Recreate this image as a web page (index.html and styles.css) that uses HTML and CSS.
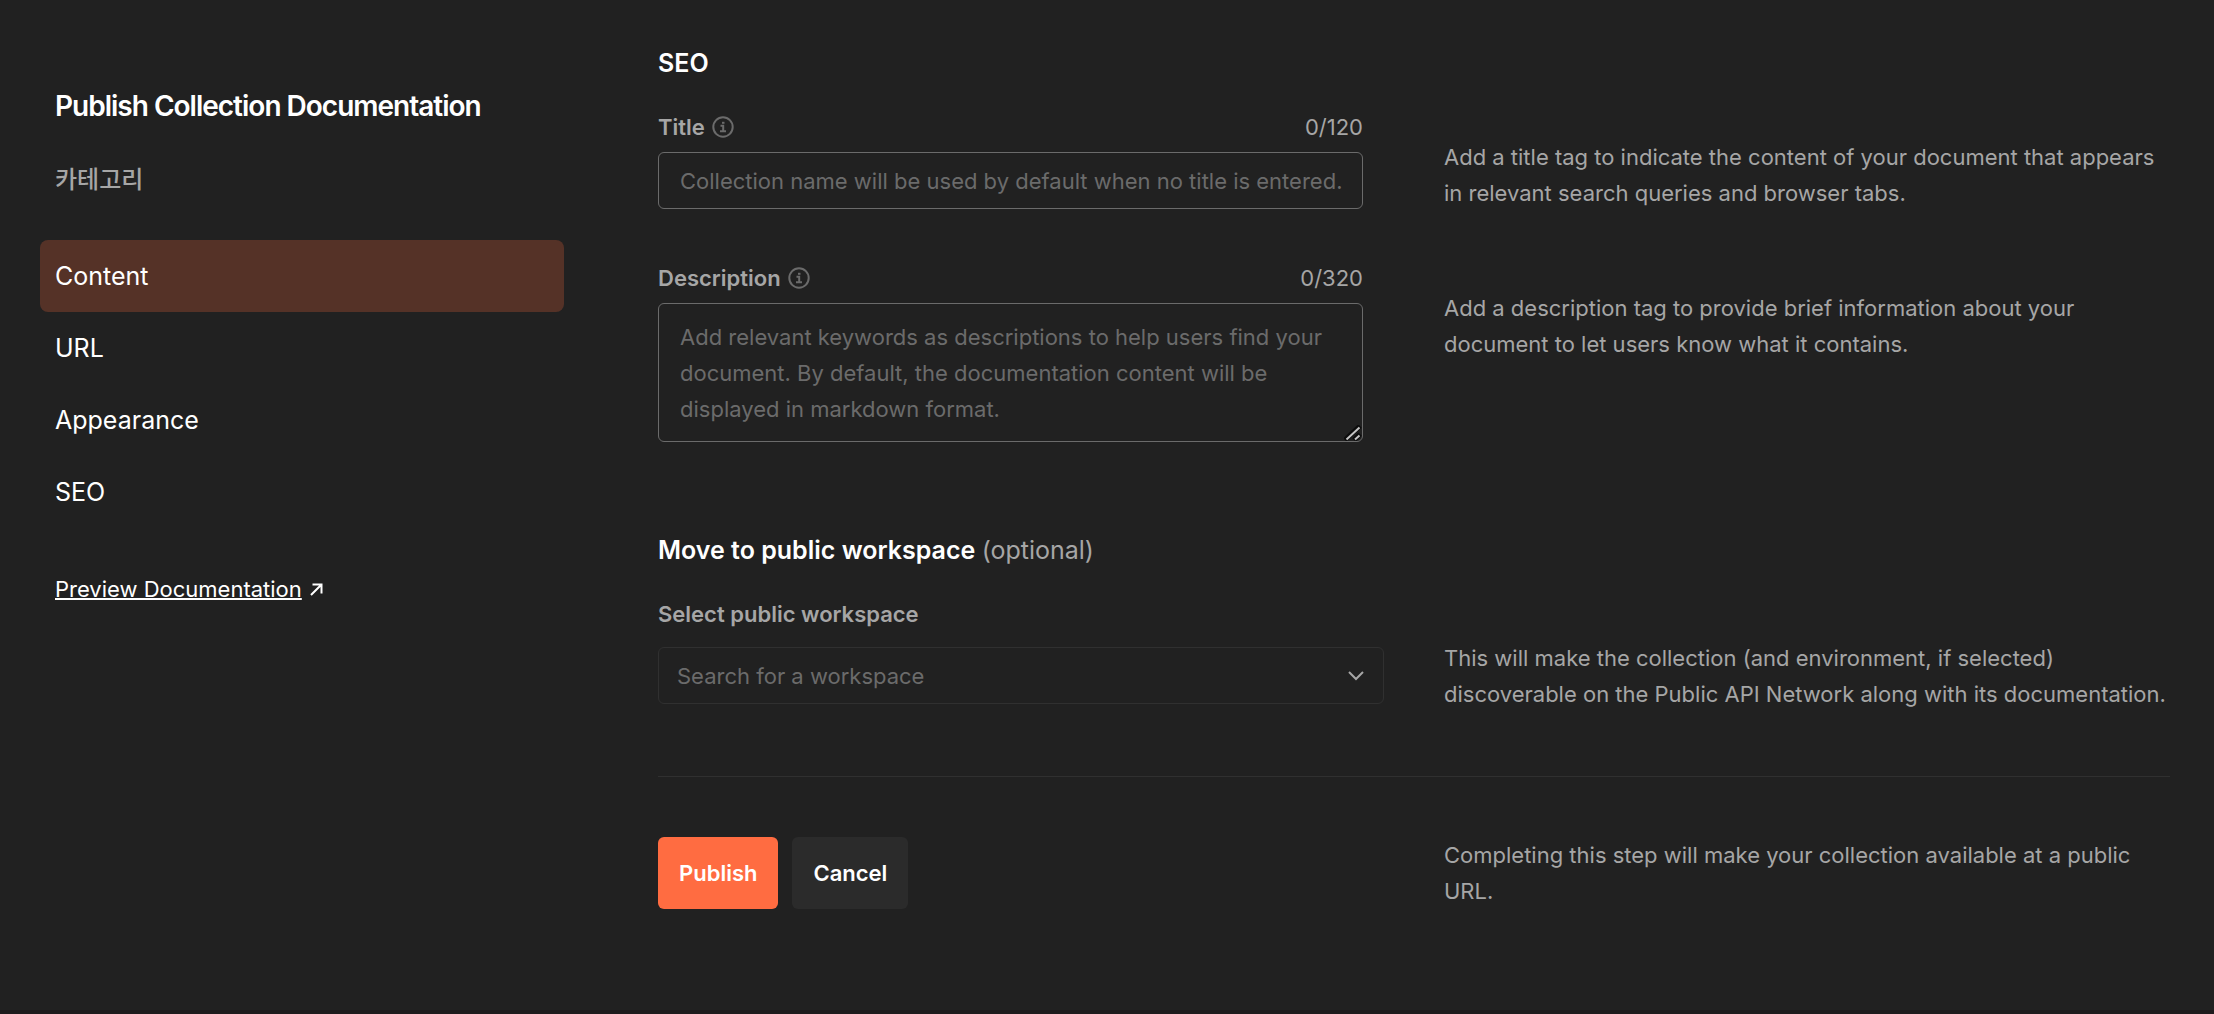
FILE: index.html
```html
<!DOCTYPE html>
<html lang="en">
<head>
<meta charset="utf-8">
<title>Publish Collection Documentation</title>
<link rel="stylesheet" href="styles.css">
</head>
<body>
<div class="page">
  <aside class="sidebar">
    <h1 class="sidebar-title">Publish Collection Documentation</h1>
    <p class="collection-name" lang="ko">카테고리</p>
    <nav class="nav">
      <a class="nav-item active" href="#content">Content</a>
      <a class="nav-item" href="#url">URL</a>
      <a class="nav-item" href="#appearance">Appearance</a>
      <a class="nav-item" href="#seo">SEO</a>
    </nav>
    <a class="preview" href="#preview"><span class="preview-text">Preview Documentation</span><svg class="preview-icon" width="13" height="13" viewBox="0 0 13 13" fill="none" stroke="currentColor" stroke-width="2"><path d="M2.500 1.500H11.500V10.500M11.500 1.500L1 12"/></svg></a>
  </aside>
  <main class="main">
    <form class="form">
      <section class="section" id="seo">
        <h2 class="heading">SEO</h2>
        <div class="row">
          <div class="field">
            <div class="label-row">
              <label class="label" for="title">Title</label>
              <svg class="info" width="22" height="22" viewBox="0 0 22 22" fill="none" stroke="currentColor" stroke-width="2"><circle cx="11" cy="11" r="9.700"/><path d="M8.500 9.800H11.200V15M8 15.300h6"/><path d="M10 6.800h2.500"/></svg>
              <span class="counter">0/120</span>
            </div>
            <input class="input" id="title" type="text" placeholder="Collection name will be used by default when no title is entered.">
          </div>
          <p class="help">Add a title tag to indicate the content of your document that appears in relevant search queries and browser tabs.</p>
        </div>
        <div class="row">
          <div class="field">
            <div class="label-row">
              <label class="label" for="description">Description</label>
              <svg class="info" width="22" height="22" viewBox="0 0 22 22" fill="none" stroke="currentColor" stroke-width="2"><circle cx="11" cy="11" r="9.700"/><path d="M8.500 9.800H11.200V15M8 15.300h6"/><path d="M10 6.800h2.500"/></svg>
              <span class="counter">0/320</span>
            </div>
            <div class="textarea-box">
              <textarea class="input textarea" id="description" placeholder="Add relevant keywords as descriptions to help users find your document. By default, the documentation content will be displayed in markdown format."></textarea>
              <svg class="grip" width="18" height="16" viewBox="0 0 18 16" fill="none"><path d="M1 15L16 1M10 15L16 9" stroke="#0c0c0c" stroke-width="5"/><path d="M2.500 14.500L15.500 2.500M11 14.500L15.500 10.500" stroke="#c4c4c4" stroke-width="2"/></svg>
            </div>
          </div>
          <p class="help">Add a description tag to provide brief information about your document to let users know what it contains.</p>
        </div>
      </section>
      <section class="section workspace">
        <h2 class="heading">Move to public workspace <span class="optional">(optional)</span></h2>
        <div class="row">
          <div class="select-field">
            <label class="label" for="workspace">Select public workspace</label>
            <div class="select-box">
              <select class="select" id="workspace"><option>Search for a workspace</option></select>
              <svg class="chevron" width="16" height="10" viewBox="0 0 16 10" fill="none" stroke="currentColor" stroke-width="2"><path d="M1 1L8 8L15 1"/></svg>
            </div>
          </div>
          <p class="help workspace-help">This will make the collection (and environment, if selected) discoverable on the Public API Network along with its documentation.</p>
        </div>
      </section>
      <footer class="footer row">
        <div class="actions">
          <button class="button primary" type="submit">Publish</button>
          <button class="button" type="button">Cancel</button>
        </div>
        <p class="footer-help">Completing this step will make your collection available at a public URL.</p>
      </footer>
    </form>
  </main>
</div>
</body>
</html>
```
FILE: styles.css
```css
* {
  box-sizing: border-box;
}

body {
  margin: 0;
  background: #212121;
  color: #fff;
  font: 22px/36px Inter, "Noto Sans CJK KR", sans-serif;
}

h1, h2, p {
  margin: 0;
}

.page {
  display: grid;
  grid-template-columns: 564px 1fr;
  column-gap: 94px;
  min-height: 100vh;
  padding-right: 44px;
  border-bottom: 4px solid #1e1a1c;
}

.sidebar {
  padding: 88px 0 0 40px;
}

.sidebar-title {
  padding-left: 15px;
  font-size: 28px;
  line-height: 36px;
  font-weight: 600;
  letter-spacing: -1px;
}

.collection-name {
  padding: 38px 0 0 15px;
  color: #a6a6a6;
  font-size: 24px;
  line-height: 36px;
  font-weight: 500;
}

.nav {
  display: flex;
  flex-direction: column;
  margin: 42px 0 43px;
}

.nav-item {
  padding: 18px 15px;
  border-radius: 8px;
  color: #fff;
  font-size: 25px;
  text-decoration: none;
}

.active {
  background: #553227;
}

.preview {
  display: inline-flex;
  align-items: center;
  gap: 8px;
  padding-left: 15px;
  color: #fff;
  text-decoration: none;
}

.preview-text {
  text-decoration: underline;
  text-decoration-thickness: 2px;
}

.main {
  padding-top: 45px;
}

.heading {
  margin-bottom: 28px;
  font-size: 25px;
  line-height: 36px;
  font-weight: 600;
}

.optional {
  color: #a6a6a6;
  font-weight: 400;
}

.row {
  display: grid;
  grid-template-columns: minmax(0, 726px) minmax(0, 1fr);
  column-gap: 60px;
  align-items: start;
}

.row + .row {
  margin-top: 49px;
}

.field {
  padding-right: 21px;
}

.label-row {
  display: flex;
  align-items: center;
  gap: 7px;
  height: 36px;
  margin-bottom: 7px;
}

.label {
  color: #a6a6a6;
  font-weight: 600;
}

.info {
  color: #6b6b6b;
}

.counter {
  margin-left: auto;
  color: #a6a6a6;
}

.input {
  display: block;
  width: 100%;
  height: 57px;
  padding: 9px 8px 9px 21px;
  border: 1px solid #6b6b6b;
  border-radius: 6px;
  background: transparent;
  color: #fff;
  font: inherit;
}

.textarea-box {
  position: relative;
}

.textarea {
  height: 139px;
  padding-top: 15px;
  overflow: hidden;
  resize: vertical;
}

.textarea::-webkit-resizer {
  background: transparent;
}

.grip {
  position: absolute;
  right: 1px;
  bottom: 1px;
  pointer-events: none;
}

.input::placeholder {
  color: #6b6b6b;
  opacity: 1;
}

.help {
  padding-top: 30px;
  color: #a6a6a6;
}

.workspace {
  margin-top: 90px;
}

.workspace-help {
  padding-top: 44px;
}

.select-field .label {
  display: block;
  margin-bottom: 15px;
}

.select-box {
  display: grid;
  align-items: center;
}

.select, .chevron {
  grid-area: 1 / 1;
}

.select {
  width: 100%;
  height: 57px;
  padding: 0 18px;
  border: 1px solid #303030;
  border-radius: 6px;
  background: transparent;
  color: #6b6b6b;
  font: inherit;
  appearance: none;
}

.chevron {
  justify-self: end;
  margin-right: 20px;
  color: #a6a6a6;
  pointer-events: none;
}

.footer {
  margin-top: 64px;
  padding-top: 60px;
  border-top: 1px solid #303030;
}

.actions {
  display: flex;
  gap: 14px;
}

.button {
  height: 72px;
  padding: 0 21px;
  border: 0;
  border-radius: 6px;
  background: #2b2b2b;
  color: #fff;
  font: inherit;
  font-weight: 600;
}

.primary {
  background: #ff6c41;
}

.footer-help {
  color: #a6a6a6;
}
```
